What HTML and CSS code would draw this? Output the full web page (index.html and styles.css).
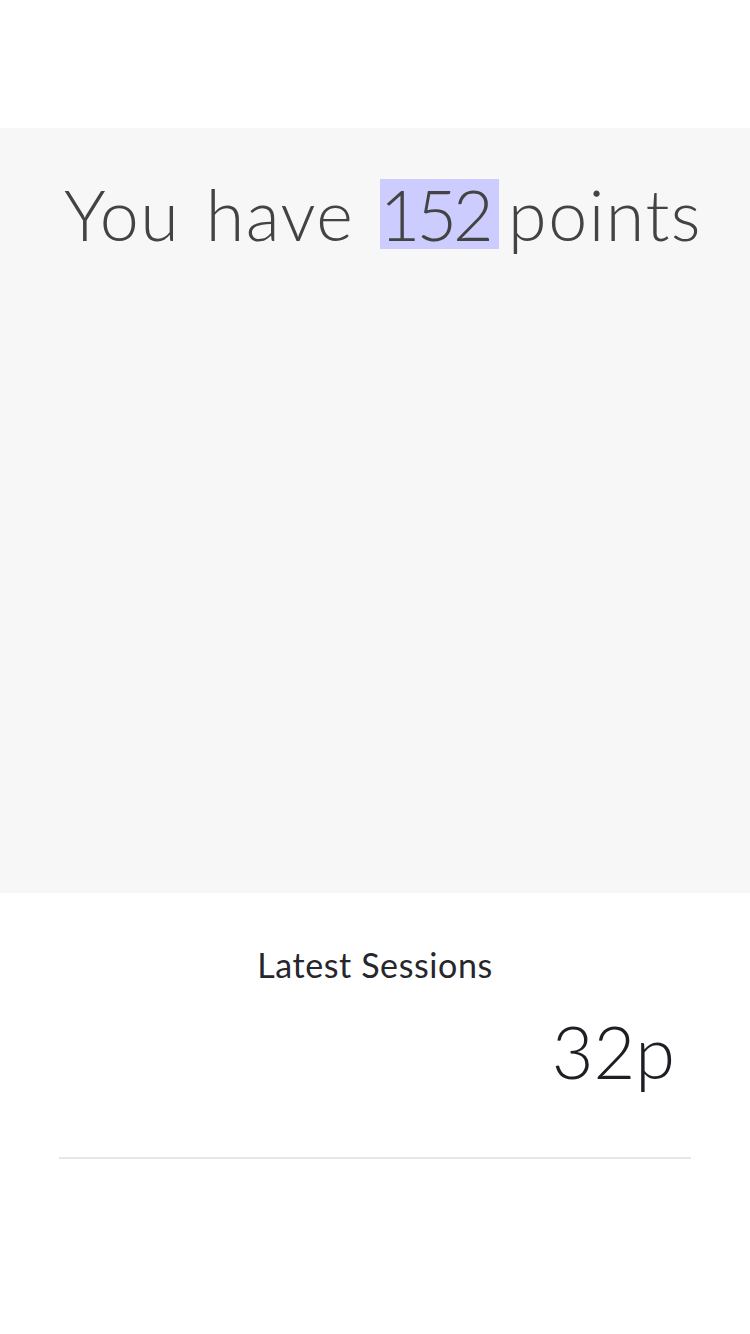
FILE: index.html
```html
<!DOCTYPE html>
<html>
<head>
<meta charset="utf-8">
<link rel="stylesheet" href="styles.css">
</head>
<body>
<div class="page">
  <header class="topbar"></header>
  <section class="hero">
    <h1 class="points">You have <span class="hl">152</span> points</h1>
  </section>
  <section class="sessions">
    <h2 class="sessions-title">Latest Sessions</h2>
    <div class="session-row">
      <span class="session-value">32p</span>
    </div>
  </section>
</div>
</body>
</html>
```

FILE: styles.css
```css
html, body {
  margin: 0;
  padding: 0;
  background: #ffffff;
}
body {
  font-family: Lato, "Open Sans", sans-serif;
}
.page {
  width: 750px;
  min-height: 1334px;
  display: flex;
  flex-direction: column;
}
.topbar {
  height: 128px;
  background: #ffffff;
}
.hero {
  height: 765px;
  background: #f7f7f7;
  display: flex;
  flex-direction: column;
  align-items: center;
}
.points {
  margin: 51px 0 0 16px;
  font-size: 70px;
  font-weight: 300;
  line-height: 70px;
  letter-spacing: 1.5px;
  word-spacing: 5px;
  color: #434343;
  white-space: nowrap;
}
.hl {
  display: inline-block;
  background: #ccccff;
  letter-spacing: -4px;
  padding-right: 9px;
  margin-right: -16px;
}
.sessions {
  display: flex;
  flex-direction: column;
  align-items: center;
}
.sessions-title {
  margin: 50px 0 0 0;
  font-size: 34px;
  font-weight: 400;
  line-height: 44px;
  letter-spacing: 0.6px;
  color: #26262c;
}
.session-row {
  width: 632px;
  display: flex;
  justify-content: flex-end;
  border-bottom: 2px solid #e6e6e6;
  padding-bottom: 66px;
  margin-top: 24px;
}
.session-value {
  font-size: 72px;
  font-weight: 300;
  line-height: 80px;
  color: #1e1e24;
  margin-right: 16px;
}
```
